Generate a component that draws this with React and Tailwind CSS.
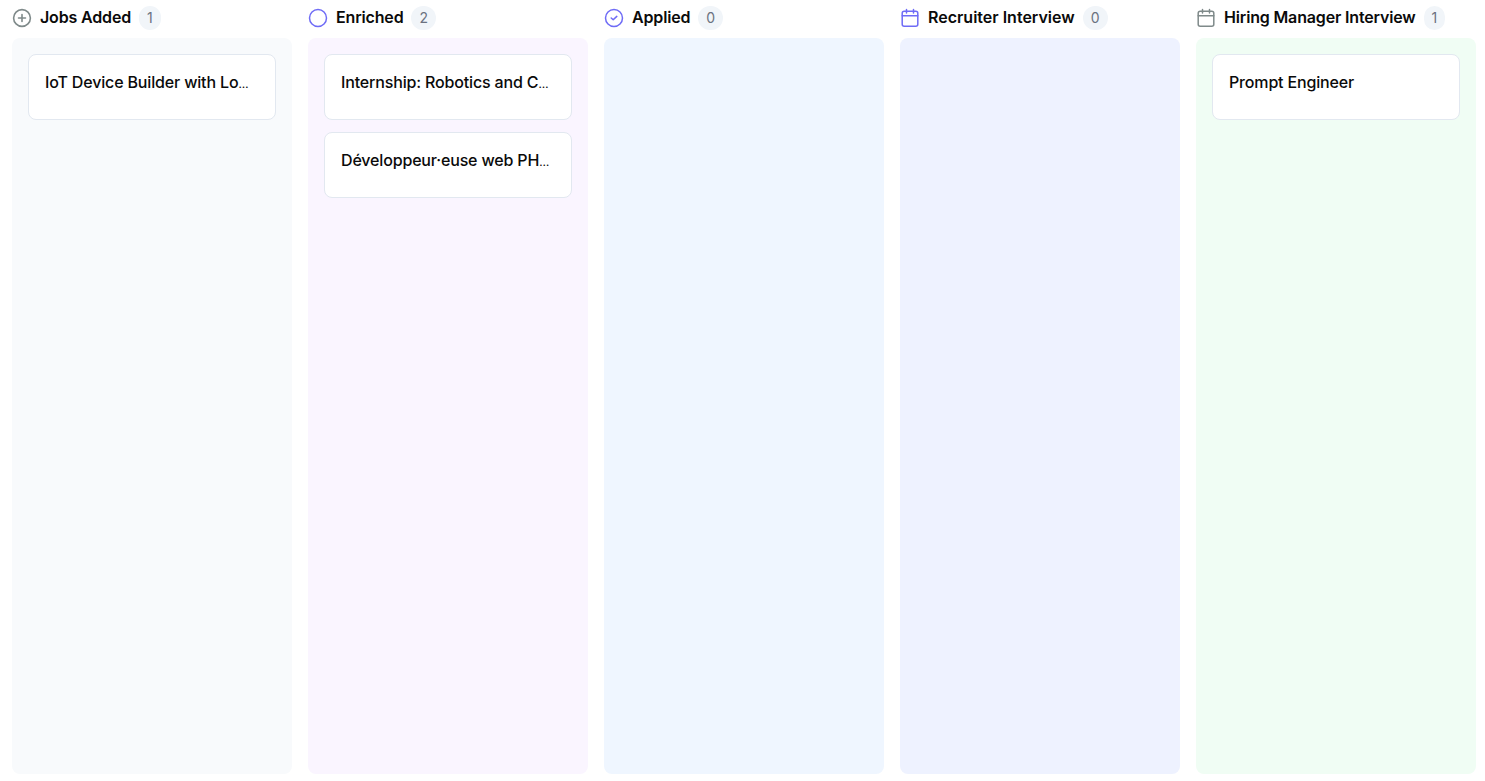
import React from "react";

const PlusCircle = () => (
  <svg width="20" height="20" viewBox="0 0 20 20" fill="none" stroke="#7f8a8a" strokeWidth="1.6" strokeLinecap="round">
    <circle cx="10" cy="10" r="8.4" />
    <path d="M10 6.5v7M6.5 10h7" />
  </svg>
);
const Circle = () => (
  <svg width="20" height="20" viewBox="0 0 20 20" fill="none" stroke="#6f6cf6" strokeWidth="1.5">
    <circle cx="10" cy="10" r="8.5" />
  </svg>
);
const CheckCircle = () => (
  <svg width="20" height="20" viewBox="0 0 20 20" fill="none" stroke="#6f6cf6" strokeWidth="1.5" strokeLinecap="round" strokeLinejoin="round">
    <circle cx="10" cy="10" r="8.5" />
    <path d="M7.2 10l2 1.8 3.6-3.4" />
  </svg>
);
const Calendar = ({ color }) => (
  <svg width="20" height="20" viewBox="0 0 20 20" fill="none" stroke={color} strokeWidth="1.5" strokeLinecap="round" strokeLinejoin="round">
    <rect x="2.2" y="3.2" width="15.6" height="15" rx="2" />
    <path d="M2.2 7.7h15.6M6.5 1.5v3.4M13.5 1.5v3.4" />
  </svg>
);

const columns = [
  { title: "Jobs Added", track: "tracking-[-0.01em]", count: 1, icon: <PlusCircle />, bg: "bg-[#f8fafc]", cards: ["IoT Device Builder with Lo…"] },
  { title: "Enriched", track: "tracking-[-0.01em]", count: 2, icon: <Circle />, bg: "bg-[#faf5ff]", cards: ["Internship: Robotics and C…", "Développeur·euse web PH…"] },
  { title: "Applied", track: "tracking-[-0.01em]", count: 0, icon: <CheckCircle />, bg: "bg-[#eff6ff]", cards: [] },
  { title: "Recruiter Interview", track: "tracking-normal", count: 0, icon: <Calendar color="#6f6cf6" />, bg: "bg-[#eef2ff]", cards: [] },
  { title: "Hiring Manager Interview", track: "tracking-[-0.01em]", count: 1, icon: <Calendar color="#7f8a8a" />, bg: "bg-[#f0fdf4]", cards: ["Prompt Engineer"] },
];

const CardTitle = ({ text }) => {
  const cut = text.endsWith("…");
  return (
    <div className="whitespace-nowrap text-base font-medium leading-6 tracking-[-0.01em] text-[#0a0a0a]">
      {cut ? text.slice(0, -1) : text}
      {cut && <span className="text-[11px] tracking-[-0.05em]">…</span>}
    </div>
  );
};

export default function App() {
  return (
    <div className="flex h-[781px] w-[1485px] gap-4 overflow-hidden bg-white pt-1.5 pr-[9px] pb-[7px] pl-3 font-['Inter',sans-serif] text-black">
      {columns.map((c) => (
        <div key={c.title} className="flex w-[280px] shrink-0 flex-col">
          <div className="flex h-6 items-center">
            <span className="mr-2 flex h-5 w-5 shrink-0 items-center justify-center">{c.icon}</span>
            <span className={`pb-0.5 text-base font-semibold leading-6 text-[#0a0a0a] ${c.track}`}>{c.title}</span>
            <span className="ml-2 flex h-6 items-center justify-center rounded-full bg-[#f1f5f9] px-2 text-sm leading-5 text-[#6b7280]">{c.count}</span>
          </div>
          <div className={`mt-2 flex flex-1 flex-col gap-3 rounded-lg p-4 ${c.bg}`}>
            {c.cards.map((t) => (
              <div key={t} className="h-[66px] rounded-lg border border-[#e2e8f0] bg-white px-4 py-[15px]">
                <CardTitle text={t} />
              </div>
            ))}
          </div>
        </div>
      ))}
    </div>
  );
}
